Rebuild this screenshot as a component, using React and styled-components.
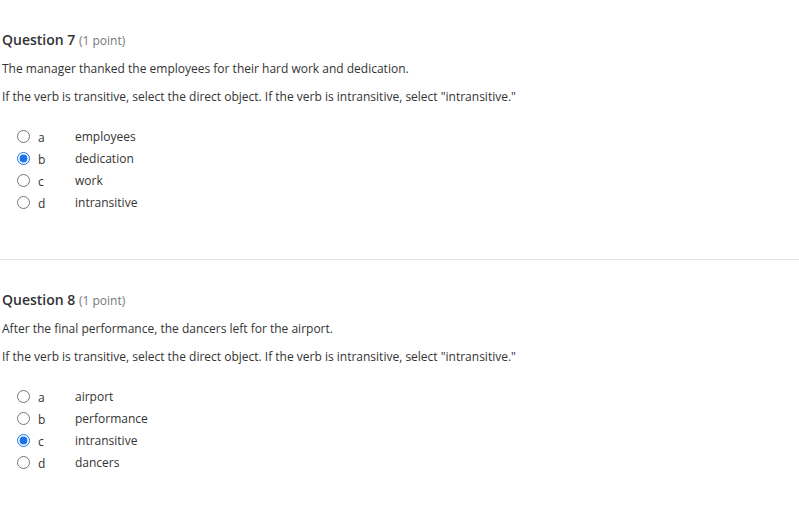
import React from "react";
import styled, { createGlobalStyle } from "styled-components";

const GlobalStyle = createGlobalStyle`
  body {
    margin: 0;
    background: #fff;
    font-family: "Open Sans", "Noto Sans", sans-serif;
    color: #333;
  }
`;

const questions = [
  {
    number: 7,
    sentence: "The manager thanked the employees for their hard work and dedication.",
    options: ["employees", "dedication", "work", "intransitive"],
    selected: 1,
  },
  {
    number: 8,
    sentence: "After the final performance, the dancers left for the airport.",
    options: ["airport", "performance", "intransitive", "dancers"],
    selected: 2,
  },
];

const prompt =
  'If the verb is transitive, select the direct object. If the verb is intransitive, select "intransitive."';

const App = () => {
  return (
    <Page>
      <GlobalStyle />
      {questions.map((q, qi) => (
        <Section key={q.number} $last={qi === questions.length - 1}>
          <Heading>
            Question {q.number} <Points>(1 point)</Points>
          </Heading>
          <Text>{q.sentence}</Text>
          <Text>{prompt}</Text>
          <Options>
            {q.options.map((opt, i) => (
              <Option key={opt}>
                <Radio
                  type="radio"
                  name={`q${q.number}`}
                  defaultChecked={i === q.selected}
                />
                <Letter>{"abcd"[i]}</Letter>
                <Answer>{opt}</Answer>
              </Option>
            ))}
          </Options>
        </Section>
      ))}
    </Page>
  );
};

export default App;

const Page = styled.div`
  width: 799px;
`;

const Section = styled.div`
  padding: 30px 0 46px 2px;
  border-bottom: ${(p) => (p.$last ? "none" : "1px solid #e4e4e4")};
`;

const Heading = styled.div`
  font-size: 14px;
  font-weight: 600;
  line-height: 20px;
  color: #333;
`;

const Points = styled.span`
  font-size: 12px;
  font-weight: 400;
  color: #777;
`;

const Text = styled.div`
  font-size: 12px;
  line-height: 20px;
  margin-top: 8px;
  color: #333;
`;

const Options = styled.div`
  margin-top: 18px;
  display: flex;
  flex-direction: column;
`;

const Option = styled.label`
  display: flex;
  align-items: center;
  height: 22px;
  font-size: 12px;
  color: #333;
`;

const Radio = styled.input`
  width: 13px;
  height: 13px;
  margin: 0 0 0 15px;
  accent-color: #1a73e8;
`;

const Letter = styled.span`
  margin-left: 8px;
  width: 37px;
  padding-top: 3px;
`;

const Answer = styled.span``;
